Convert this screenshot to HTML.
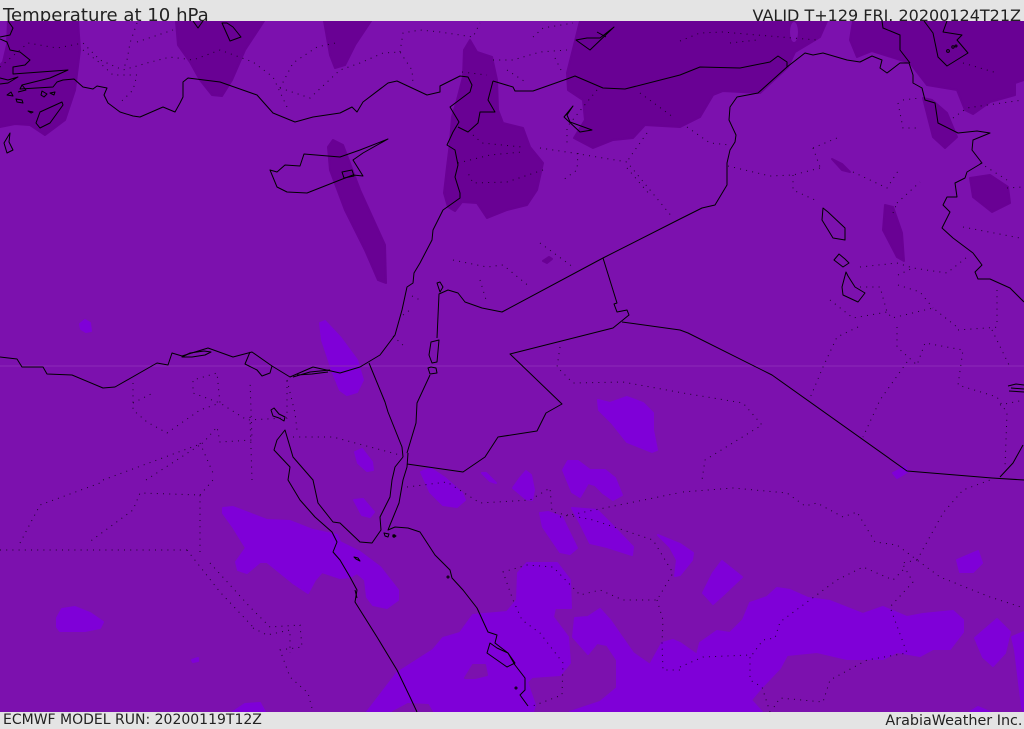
<!DOCTYPE html>
<html lang="en"><head><meta charset="utf-8"><title>Temperature at 10 hPa</title>
<style>
html,body{margin:0;padding:0;width:1024px;height:729px;overflow:hidden;background:#e4e4e4}
.t{position:absolute;font-family:"DejaVu Sans",sans-serif;color:#222;white-space:nowrap;line-height:1}
svg{position:absolute;left:0;top:21px}
</style></head><body>
<div class="t" style="left:3px;top:7px;font-size:18.1px">Temperature at 10 hPa</div>
<div class="t" style="right:3px;top:8px;font-size:16px">VALID T+129 FRI. 20200124T21Z</div>
<div class="t" style="left:3px;top:713px;font-size:14px">ECMWF MODEL RUN: 20200119T12Z</div>
<div class="t" style="right:1.5px;top:714px;font-size:14.35px">ArabiaWeather Inc.</div>
<svg width="1024" height="691" viewBox="0 21 1024 691">
<rect x="0" y="21" width="1024" height="691" fill="#7c11ae"/>
<g fill="#690194" stroke="#690194" stroke-width="2" stroke-linejoin="round">
<path d="M8,21 78,21 80,50 75,90 65,120 45,135 30,125 15,124 0,127 0,65 3,62 7,45Z"/>
<path d="M176,21 178,45 190,62 200,80 212,95 222,96 232,80 245,50 264,21Z"/>
<path d="M324,21 330,55 335,68 345,65 355,45 371,21Z"/>
<path d="M470,40 464,50 463,77 457,100 452,117 450,143 447,167 444,193 448,207 455,211 462,202 477,203 487,218 507,210 527,205 537,190 543,163 530,147 523,128 503,123 498,110 497,80 492,57 477,52Z"/>
<path d="M580,21 567,73 568,90 583,100 585,120 574,138 593,148 613,140 633,138 645,125 680,127 700,117 713,95 723,91 760,93 788,67 795,52 820,37 827,21Z"/>
<path d="M853,21 850,40 857,57 872,51 910,63 927,85 957,90 965,110 973,114 990,102 1015,95 1015,83 1024,80 1024,21Z"/>
<path d="M923,98 933,137 945,148 957,137 947,113 932,100Z"/>
<path d="M970,178 973,197 992,212 1010,203 1008,187 990,175Z"/>
<path d="M832,159 842,164 850,172 842,170Z"/>
<path d="M885,205 893,207 902,233 904,261 897,257 883,230Z"/>
<path d="M328,147 333,140 343,145 360,190 385,245 386,283 378,280 365,250 345,210 330,170Z"/>
<path d="M543,261 549,257 552,259 547,263Z"/>
</g>
<ellipse cx="794" cy="32" rx="4" ry="10" fill="#7c11ae"/>
<g fill="#7f00d8" stroke="#7f00d8" stroke-width="2" stroke-linejoin="round">
<path d="M80,324 85,320 90,323 91,331 86,332 81,329Z"/>
<path d="M320,323 325,321 340,337 357,360 363,380 357,392 347,395 340,390 333,373 322,340Z"/>
<path d="M355,452 362,449 372,462 373,470 367,471 358,463Z"/>
<path d="M354,500 363,499 374,512 370,517 362,515Z"/>
<path d="M223,508 233,507 267,520 290,521 313,530 337,535 340,542 360,552 380,567 398,590 398,600 387,608 373,605 367,597 365,580 357,573 350,577 340,578 322,572 315,580 308,593 293,583 267,562 260,562 247,573 238,570 236,562 246,548 233,527 223,513Z"/>
<path d="M57,618 62,609 75,607 90,613 103,622 100,628 85,631 60,631 57,627Z"/>
<path d="M192,660 198,658 198,661 193,662Z"/>
<path d="M233,712 245,704 260,703 265,712Z"/>
<path d="M367,712 397,673 433,650 443,638 460,633 473,615 507,612 517,600 518,573 527,563 557,563 570,580 571,608 555,608 553,617 568,637 570,663 560,675 532,677 527,682 535,705 533,712Z"/>
<path d="M570,712 600,702 617,688 617,660 607,645 597,643 588,654 573,637 575,618 588,617 600,609 610,620 633,653 650,665 662,643 673,640 680,643 697,655 700,643 717,631 730,633 743,620 750,603 767,597 777,588 790,590 808,598 830,601 863,614 883,607 907,617 923,614 953,611 963,620 963,632 950,649 933,649 920,656 897,652 883,659 847,659 817,652 787,655 780,668 762,687 751,700 762,712Z"/>
<path d="M975,638 997,619 1010,632 1005,653 993,666 983,657Z"/>
<path d="M1012,637 1024,632 1024,712 1022,707 1015,650Z"/>
<path d="M970,712 978,707 990,712Z"/>
<path d="M598,400 610,403 627,397 643,403 653,413 653,430 657,450 652,452 627,442 612,423 599,410Z"/>
<path d="M563,470 568,461 578,461 590,470 605,470 615,478 622,495 613,500 603,493 595,485 588,483 583,492 580,497 572,492Z"/>
<path d="M421,472 430,468 445,478 462,493 465,500 457,507 443,505 430,492Z"/>
<path d="M482,473 486,473 496,483 490,481Z"/>
<path d="M513,488 520,478 526,471 531,475 534,490 532,500 526,499Z"/>
<path d="M540,513 548,512 562,517 577,548 570,554 560,552 543,527Z"/>
<path d="M572,508 597,510 610,523 633,547 632,555 607,547 590,543 580,523Z"/>
<path d="M658,535 680,544 693,553 692,560 680,575 675,576 677,560 670,547Z"/>
<path d="M722,561 742,577 723,595 713,604 703,593 713,573Z"/>
<path d="M957,560 978,551 982,563 973,572 960,572Z"/>
<path d="M893,473 905,467 907,472 897,478Z"/>
</g>
<g fill="#7c11ae" stroke="#7c11ae" stroke-width="2" stroke-linejoin="round">
<path d="M465,678 473,665 485,665 487,675 475,678Z"/>
<path d="M393,712 408,704 428,705 432,712Z"/>
</g>
<rect x="0" y="365.5" width="1024" height="1" fill="#8c2cb8"/>
<g fill="none" stroke="#110018" stroke-width="1" stroke-dasharray="1 5.2" stroke-opacity=".85">
<path d="M0,67 28,43 57,48 83,43 100,60 123,70 147,63 170,57 193,60 220,50 253,62 273,77 287,107"/>
<path d="M83,50 100,63 113,75 137,75 133,90 123,100 118,103"/>
<path d="M137,23 130,43 127,60 123,70M137,42 173,30"/>
<path d="M280,88 293,63 317,47 340,42M280,88 310,98 340,70 360,63 383,53 400,52 412,70 413,83"/>
<path d="M400,52 403,33 420,30 440,32 473,37 480,23M462,72 487,75M493,60 513,60 540,52 567,50M555,58 562,72M533,37 543,28 573,23M507,70 527,83"/>
<path d="M540,148 573,153 627,162 673,218 M627,168 650,195M578,153 577,170 563,180M543,170 507,182 473,183 468,173M458,163 490,155 522,152M473,135 482,143 522,147M647,133 630,157 627,162M597,90 583,107 567,127 567,147M640,93 673,117"/>
<path d="M680,41 700,33 723,32 757,35 817,40M730,43 757,40M687,127 710,143 730,145"/>
<path d="M728,166 770,176 793,175 820,168M793,175 793,190 815,200M813,148 837,138M813,148 820,167M853,172 887,188 900,168M897,203 920,182M893,213 897,203M903,100 920,98M898,103 903,128 920,128M953,118 967,108 1023,100M963,63 997,73M963,227 1020,238M1007,188 1023,187M980,163 1007,180"/>
<path d="M860,267 897,263 913,268 947,273 967,257M898,275 913,268M860,287 880,287 887,312 892,318 933,308 957,327M898,285 920,292 933,308M830,300 853,318 887,312M858,327 837,337 823,367 810,398M897,327 897,347 917,365 925,343 963,350 958,385 997,397 1007,413 1005,467M958,330 1000,327M992,330 1010,367M997,290 997,327M907,362 880,400 863,437M1000,405 1024,400"/>
<path d="M560,347 557,367 573,383 623,382 683,393 743,403 762,425 705,460 702,480"/>
<path d="M683,492 733,488 787,493 805,506 817,503 843,517 857,512 875,542 897,545 917,560 940,577 990,597 1024,608M917,560 943,513 963,490 990,480M917,560 902,563 913,582 890,607 907,653 867,660 830,680 823,702 780,698 772,710M680,667 703,657 750,655 750,680 762,687 770,712M903,570 893,580 863,567 837,580 780,622 775,638 763,640 752,655"/>
<path d="M407,487 447,482 480,503 530,500 550,488 552,512 593,520 653,540 673,573 657,600 623,600 600,590 580,595 553,567 527,565 503,572 513,600 522,620 540,633 563,663 562,695 530,707M560,517 678,493M657,600 663,620 662,643 663,670 680,670"/>
<path d="M0,550 187,550M200,552 200,495 140,493 133,510 88,543M20,543 40,505 100,483M200,495 213,480M187,550 220,592 253,627M210,563 250,607 270,627 300,625 302,647 280,650 290,677 308,693 313,712M253,628 267,635 290,630 290,653"/>
<path d="M133,383 133,410 147,422 167,433 200,410 220,403 217,373 193,380 193,393 220,403 247,420 287,418 287,380M133,403 153,393M103,480 203,443 217,427 220,442 252,440 250,380M200,443 213,473M250,417 252,480M293,437 333,437 400,455M287,380 295,413 297,430M146,480 203,443"/>
<path d="M453,260 487,267 503,265 530,287M480,280 487,303M540,243 573,267M393,336 405,347M412,296 420,300M403,315 410,310"/>
</g>
<g fill="none" stroke="#000" stroke-width="1" stroke-linejoin="round">
<path d="M8,21 13,28 10,35 0,37M0,39 7,42 10,50 20,52 30,60 25,65 13,67 13,74 68,70 50,78 22,85 20,89 53,87 57,82 63,80 74,79 83,87 93,89 97,86 107,88 104,95 108,103 120,112 133,116 140,117 163,107 175,112 180,103 183,97 183,82 188,78 220,82 257,95 273,113 295,122 313,117 340,113 352,107 357,112 363,102 388,83 397,81 427,95 440,92 440,86 460,76 468,77 472,85 470,92 450,107 459,122 453,132 447,145 455,150 458,165 455,177 460,193 460,198 443,210 433,230 432,240 420,263 414,273 413,283 407,287 402,310 395,335 380,355 360,367 340,373 313,367 290,377 272,366 252,352 233,357 208,348 182,356 172,353 168,365 157,363 115,387 103,388 72,375 47,374 43,367 22,367 17,359 0,357"/>
<path d="M62,102 40,112 36,123 40,128 50,123 63,105Z"/>
<path d="M10,133 4,143 7,153 13,150 9,142Z"/>
<path d="M0,78 8,80 18,77 8,83 0,84M18,92 26,90 22,85M7,95 11,92 13,96ZM16,99 22,100 23,103 17,102ZM28,111 33,112 31,113ZM42,91 47,94 44,97 41,95ZM50,93 55,92 54,95Z"/>
<path d="M193,21 198,28 203,21M222,23 230,41 241,37 233,27 227,23Z"/>
<path d="M270,170 277,172 285,165 300,166 304,154 340,157 360,150 388,139 363,153 353,160 363,176 353,175 340,180 307,193 287,192 277,187Z"/>
<path d="M342,172 352,170 354,176 344,178Z"/>
<path d="M576,40 590,50 614,27 600,38 587,38Z"/>
<path d="M597,32 606,37M573,106 564,117 580,132 592,130 570,122 567,115Z"/>
<path d="M493,81 488,100 495,112 480,112 478,123 468,132 458,127M493,81 513,87 515,91 533,91 567,79 575,76 603,88 625,89 680,75 700,67 740,68 770,62 778,56 787,62 787,67 805,53 813,55 823,53 847,60 860,62 872,56 882,60 880,68 887,73 900,63 909,63 913,75 913,83 922,88 925,100 935,103 938,123 958,133 977,131 990,133 973,140 972,150 982,163 967,172 965,178 955,183 957,197 947,197 943,205 950,212 942,228 953,238 973,253 982,265 975,272 978,279 990,279 1010,288 1024,302"/>
<path d="M787,67 758,93 737,97 730,107 729,120 736,135 735,142 730,150 727,163 727,185 715,205 702,208 680,219 603,258 502,312 482,308 465,302 458,293 448,290 439,294 437,338"/>
<path d="M603,258 617,303 614,304 617,312 627,310 629,315 613,328 510,354 562,404 546,413 537,431 498,437 485,457 463,472 407,464"/>
<path d="M622,322 680,330 688,333 772,375 907,471 992,478 1024,480M1000,477 1013,463 1023,445"/>
<path d="M369,363 385,402 388,412 402,447 403,457"/>
<path d="M439,340 431,342 429,355 432,363 437,362ZM428,368 430,374 437,373 436,368 431,367ZM430,375 417,403 416,423 407,453"/>
<path d="M437,283 440,292 443,287 440,282Z"/>
<path d="M408,453 407,467 403,480 399,503 390,525 388,530 395,527 408,528 420,532 435,555 450,570 452,578 463,590 477,608 488,632 497,635 495,643 508,653 515,665 525,678 525,690 520,695 528,706"/>
<path d="M403,457 395,467 392,480 390,497 380,517 381,530 372,543 360,542 340,523 333,522 318,503 313,480 293,457 285,430 277,440 274,450 290,467 288,480 300,500 315,517 332,532 337,542 333,552 340,560 350,577 357,590 355,602 377,637 397,670 410,697 417,712"/>
<path d="M490,643 487,653 507,667 515,663 508,653 497,648Z"/>
<path d="M182,357 190,353 204,351 211,352 205,355 192,357ZM250,352 245,364 257,370 262,376 270,373 272,366M293,377 310,372 330,370M297,375 312,374 328,372"/>
<path d="M384,533 389,534 388,537 385,536ZM393,535 396,536 394,537ZM354,557 358,558 360,561 356,559ZM355,590 357,598"/>
<path d="M839,254 834,260 843,267 849,263 845,259Z"/>
<path d="M846,272 842,287 843,295 858,302 865,293 855,287 848,276Z"/>
<path d="M823,208 822,220 833,238 845,240 845,228 828,212Z"/>
<path d="M1008,386 1016,384 1024,385M1009,391 1024,392 M1011,388 1024,389"/>
<path d="M271,410 274,408 279,414 285,417 284,421 279,418 273,416Z"/>
<path d="M924,21 933,33 938,57 947,66 968,53 957,40 962,35 943,32 947,21M882,21 883,28 900,35 900,50 910,63"/>
<circle cx="948" cy="51" r="1.4"/><circle cx="953" cy="47" r="1.2"/><circle cx="956" cy="46" r="1"/>
<circle cx="448" cy="577" r="1"/><circle cx="516" cy="688" r="1"/><circle cx="394" cy="536" r="1.2"/>
</g>
</svg>
</body></html>
